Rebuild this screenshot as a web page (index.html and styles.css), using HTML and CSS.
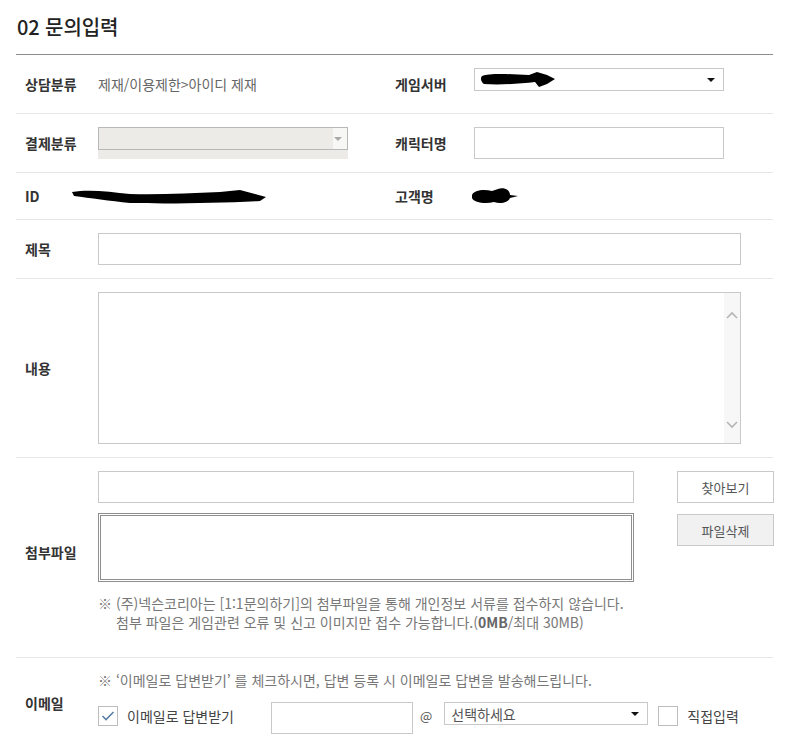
FILE: index.html
```html
<!DOCTYPE html>
<html lang="ko">
<head>
  <meta charset="UTF-8" />
  <title>문의입력</title>
  <link rel="stylesheet" href="styles.css">
</head>
<body>
  <div class="form-wrap">
    <h2 class="form-title">02 문의입력</h2>

    <!-- 상담분류 / 게임서버 -->
    <div class="row half first">
      <div class="label">상담분류</div>
      <div class="value">제재/이용제한&gt;아이디 제재</div>
      <div class="label">게임서버</div>
      <div class="field">
        <div class="select-box">
          <div class="fake-select">
            <svg class="blot" width="80" height="18" viewBox="0 0 80 18">
              <path d="M3 5 C10 2 30 3 50 4 L58 1 L68 4 L76 8 L68 13 L60 16 L56 11 C40 13 20 14 5 13 C2 11 1 7 3 5 Z" fill="#000"/>
            </svg>
            <span class="arrow"></span>
          </div>
        </div>
      </div>
    </div>

    <!-- 결제분류 / 캐릭터명 -->
    <div class="row half">
      <div class="label">결제분류</div>
      <div class="field">
        <div class="select-box disabled">
          <div class="fake-select">
            <span class="arrow light"></span>
          </div>
        </div>
      </div>
      <div class="label">캐릭터명</div>
      <div class="field">
        <input type="text" class="text-input w250">
      </div>
    </div>

    <!-- ID / 고객명 -->
    <div class="row half short">
      <div class="label">ID</div>
      <div class="value">
        <svg width="200" height="20" viewBox="0 0 200 20">
          <path d="M2 6 C20 3 40 6 60 8 C90 9 120 7 150 6 L170 4 L185 8 L196 11 L190 15 C150 17 100 18 60 17 C40 15 20 12 4 10 Z" fill="#000"/>
        </svg>
      </div>
      <div class="label">고객명</div>
      <div class="value">
        <svg width="50" height="20" viewBox="0 0 50 20">
          <path d="M2 9 C4 4 14 3 22 5 L28 3 C34 1 40 4 40 9 L48 10 L40 12 C38 17 30 18 24 16 C16 18 4 17 2 12 Z" fill="#000"/>
        </svg>
      </div>
    </div>

    <!-- 제목 -->
    <div class="row">
      <div class="label">제목</div>
      <div class="field">
        <input type="text" class="text-input w643">
      </div>
    </div>

    <!-- 내용 -->
    <div class="row tall">
      <div class="label">내용</div>
      <div class="field">
        <div class="textarea-box">
          <div class="textarea-body"></div>
          <div class="scrollbar">
            <svg width="12" height="8" viewBox="0 0 12 8"><path d="M1 7 L6 2 L11 7" fill="none" stroke="#b5b5b5" stroke-width="1.6"/></svg>
            <svg width="12" height="8" viewBox="0 0 12 8"><path d="M1 1 L6 6 L11 1" fill="none" stroke="#b5b5b5" stroke-width="1.6"/></svg>
          </div>
        </div>
      </div>
    </div>

    <!-- 첨부파일 -->
    <div class="row attach">
      <div class="label">첨부파일</div>
      <div class="field">
        <div class="file-grid">
          <input type="text" class="text-input w536">
          <button class="btn">찾아보기</button>
          <div class="file-list"></div>
          <button class="btn gray">파일삭제</button>
        </div>
        <p class="note">※ (주)넥슨코리아는 [1:1문의하기]의 첨부파일을 통해 개인정보 서류를 접수하지 않습니다.<br>
          <span class="indent">첨부 파일은 게임관련 오류 및 신고 이미지만 접수 가능합니다.(<b>0MB</b>/최대 30MB)</span></p>
      </div>
    </div>

    <!-- 이메일 -->
    <div class="row email">
      <div class="label">이메일</div>
      <div class="field">
        <p class="note top">※ ‘이메일로 답변받기’ 를 체크하시면, 답변 등록 시 이메일로 답변을 발송해드립니다.</p>
        <div class="email-line">
          <span class="check on">
            <svg width="14" height="12" viewBox="0 0 14 12"><path d="M1.5 6 L5 9.5 L12.5 2" fill="none" stroke="#5b7fa6" stroke-width="1.6"/></svg>
          </span>
          <span class="check-label">이메일로 답변받기</span>
          <input type="text" class="text-input w142">
          <span class="at">@</span>
          <div class="fake-select email-select">
            <span class="placeholder">선택하세요</span>
            <span class="arrow"></span>
          </div>
          <span class="check"></span>
          <span class="check-label">직접입력</span>
        </div>
      </div>
    </div>
  </div>
</body>
</html>
```

FILE: styles.css
```css
* {
  margin: 0;
  padding: 0;
  box-sizing: border-box;
}

body {
  font-family: "Noto Sans CJK KR", "Noto Sans", sans-serif;
  background: #fff;
  color: #333;
  font-size: 14px;
}

.form-wrap {
  width: 757px;
  margin-left: 16px;
}

.form-title {
  font-size: 20px;
  font-weight: 500;
  color: #222;
  line-height: 28px;
  padding: 13px 0 13px 1px;
  border-bottom: 1px solid #8c8c8c;
  letter-spacing: -0.1px;
}

.row {
  display: grid;
  grid-template-columns: 82px 1fr;
  align-items: center;
  min-height: 59px;
  border-bottom: 1px solid #e6e6e6;
}

.row.half {
  grid-template-columns: 82px 288px 88px 1fr;
}

.row.short {
  min-height: 47px;
}

.row.tall {
  padding: 13px 0;
}

.row.attach {
  padding: 13px 0 25px;
}

.row.email {
  padding: 13px 0 12px;
  border-bottom: none;
}

.label {
  padding-left: 9px;
  font-weight: 700;
  color: #333;
  font-size: 14px;
  line-height: 20px;
}

.value {
  font-size: 14px;
  color: #666;
  line-height: 20px;
  display: flex;
  align-items: center;
}

.row.short .value svg {
  margin-left: -28px;
}

.row.short .value:last-child svg {
  margin-left: -4px;
}

.select-box {
  width: 250px;
  height: 32px;
}

.select-box.disabled {
  background: #ecebe8;
}

.fake-select {
  height: 23px;
  border: 1px solid #c8c8c8;
  background: #fff;
  display: flex;
  align-items: center;
  justify-content: space-between;
  padding: 0 8px 0 4px;
}

.select-box.disabled .fake-select {
  background: linear-gradient(to right, #ecebe8 0, #ecebe8 234px, #f7f7f5 234px);
  border-color: #b8b8b8;
  justify-content: flex-end;
  padding-right: 5px;
}

.arrow {
  width: 0;
  height: 0;
  border-left: 4px solid transparent;
  border-right: 4px solid transparent;
  border-top: 4px solid #111;
}

.arrow.light {
  border-top-color: #aaa;
}

.text-input {
  height: 32px;
  border: 1px solid #c9c9c9;
  background: #fff;
  display: block;
  font-family: inherit;
}

.w250 { width: 250px; }
.w643 { width: 643px; }
.w536 { width: 536px; }
.w142 { width: 142px; }

.textarea-box {
  width: 643px;
  height: 152px;
  border: 1px solid #c9c9c9;
  display: flex;
}

.textarea-body {
  flex: 1;
}

.scrollbar {
  width: 16px;
  background: #f7f7f7;
  display: flex;
  flex-direction: column;
  justify-content: space-between;
  align-items: center;
  padding: 18px 0 14px;
}

.file-grid {
  display: grid;
  grid-template-columns: 536px 97px;
  column-gap: 43px;
  row-gap: 9px;
  align-items: start;
}

.file-list {
  height: 69px;
  border: 3px double #8f8f8f;
  margin-top: 1px;
}

.btn {
  height: 32px;
  border: 1px solid #c9c9c9;
  background: #fff;
  font-family: inherit;
  font-size: 13px;
  color: #555;
}

.btn.gray {
  background: #f1f1f1;
  margin-top: 2px;
}

.note {
  font-size: 14px;
  color: #777;
  line-height: 19px;
  margin-top: 12px;
}

.note b {
  font-weight: 700;
  color: #666;
}

.note .indent {
  padding-left: 18px;
}

.note.top {
  margin-top: 0;
  margin-bottom: 12px;
}

.email-line {
  display: flex;
  align-items: flex-start;
  height: 32px;
}

.check {
  width: 20px;
  height: 20px;
  border: 1px solid #bdbdbd;
  background: #fff;
  display: flex;
  align-items: center;
  justify-content: center;
  margin-top: 4px;
}

.check-label {
  font-size: 14px;
  color: #444;
  line-height: 28px;
  margin-left: 9px;
}

.email-line .check-label:nth-child(2) {
  margin-right: 37px;
}

.at {
  font-size: 13px;
  color: #555;
  line-height: 28px;
  margin: 0 12px 0 7px;
}

.email-select {
  width: 204px;
  padding: 0 8px 0 6px;
  margin-right: 10px;
}

.placeholder {
  font-size: 14px;
  color: #555;
}
```
